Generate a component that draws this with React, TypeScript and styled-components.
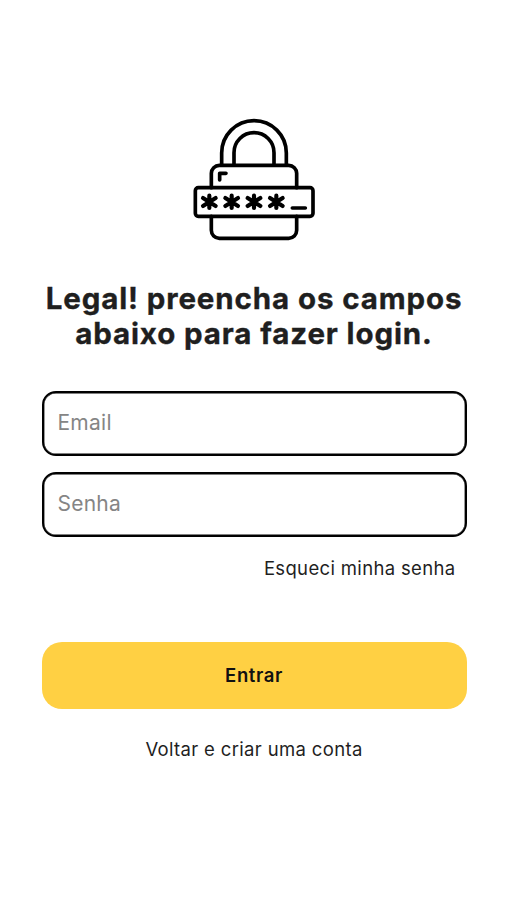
import React from "react";
import styled, { createGlobalStyle } from "styled-components";

const GlobalStyle = createGlobalStyle`
  *, *::before, *::after { box-sizing: border-box; }
  body {
    margin: 0;
    background: #fff;
    color: #1f1f1f;
    font-family: Inter, "Liberation Sans", sans-serif;
  }
`;

const Screen = styled.main`
  display: flex;
  flex-direction: column;
  align-items: center;
  width: 507px;
  height: 900px;
  padding: 110px 40px 0 41px;
  overflow: hidden;
`;

const LockDrawing = styled.svg`
  flex: none;
  width: 140px;
  height: 140px;
`;

const Title = styled.h1`
  margin: 31px -20px 0;
  font-size: 29.5px;
  line-height: 35px;
  font-weight: 700;
  letter-spacing: 0.88px;
  -webkit-text-stroke: 0.35px currentColor;
  text-align: center;
  white-space: nowrap;
`;

const Form = styled.form`
  display: flex;
  flex-direction: column;
  width: 425px;
  margin-top: 40px;
`;

const Field = styled.input`
  height: 65px;
  margin: 0 0 16px;
  padding: 0 14px 3px;
  border: 2px solid #000;
  border-radius: 14px;
  outline: none;
  box-shadow: inset 0 0 0 0.4px #000;
  background: #fff;
  font-family: inherit;
  font-size: 21px;
  letter-spacing: 0.25px;
  color: #1f1f1f;

  &::placeholder {
    color: #858585;
    opacity: 1;
  }
`;

const TextLink = styled.a`
  font-size: 18.5px;
  line-height: 24px;
  letter-spacing: 0.34px;
  color: #1f1f1f;
  text-align: center;
  text-decoration: none;
  white-space: nowrap;
`;

const ForgotRow = styled.div`
  display: flex;
  justify-content: flex-end;
  padding: 3px 11px 0 0;
`;

const SubmitButton = styled.button`
  height: 67px;
  margin: 62px 0 28px;
  padding: 0 0 1px;
  border: 0;
  border-radius: 20px;
  background: #ffd043;
  font-family: inherit;
  font-size: 18.5px;
  font-weight: 600;
  letter-spacing: 0.6px;
  color: #111;
`;

const stars = [76, 143, 210, 277];

function LockIcon() {
  return (
    <LockDrawing
      viewBox="0 0 420 420"
      fill="none"
      stroke="#000"
      strokeWidth="11"
      strokeLinecap="round"
      strokeLinejoin="round"
      aria-hidden="true"
    >
      <path d="M113 165V129a97 97 0 0 1 194 0V165" />
      <path d="M150 165V128a60 60 0 0 1 120 0V165" />
      <path d="M82 233V190a24 24 0 0 1 24-24H314a24 24 0 0 1 24 24V233" />
      <path d="M82 319V361a24 24 0 0 0 24 24H314a24 24 0 0 0 24-24V319" />
      <rect x="34" y="233" width="353" height="86" rx="9" />
      <path d="M107 210V190H126M325 294H364" />
      {stars.map((x) => (
        <path
          key={x}
          strokeWidth="12.5"
          d={`M${x} 257V294M${x - 19} 264L${x + 19} 288M${x + 19} 264L${x - 19} 288`}
        />
      ))}
    </LockDrawing>
  );
}

export default function App() {
  return (
    <>
      <GlobalStyle />
      <Screen>
        <LockIcon />
        <Title>
          Legal! preencha os campos
          <br />
          abaixo para fazer login.
        </Title>
        <Form onSubmit={(event) => event.preventDefault()}>
          <Field type="email" placeholder="Email" aria-label="Email" />
          <Field type="password" placeholder="Senha" aria-label="Senha" />
          <ForgotRow>
            <TextLink>Esqueci minha senha</TextLink>
          </ForgotRow>
          <SubmitButton type="submit">Entrar</SubmitButton>
          <TextLink>Voltar e criar uma conta</TextLink>
        </Form>
      </Screen>
    </>
  );
}
